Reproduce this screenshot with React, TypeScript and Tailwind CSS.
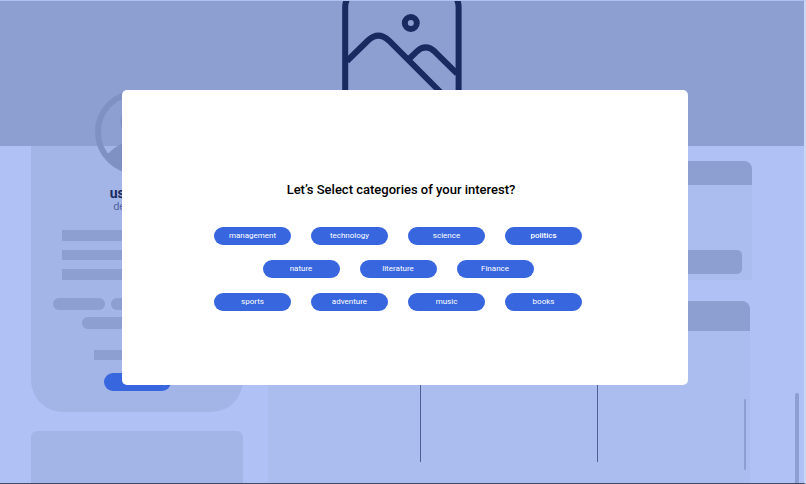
import { clsx } from 'clsx';

interface Category {
  label: string;
  selected?: boolean;
}

const CATEGORY_ROWS: Category[][] = [
  [{ label: 'management' }, { label: 'technology' }, { label: 'science' }, { label: 'politics', selected: true }],
  [{ label: 'nature' }, { label: 'literature' }, { label: 'Finance' }],
  [{ label: 'sports' }, { label: 'adventure' }, { label: 'music' }, { label: 'books' }],
];

function CoverImageIcon() {
  return (
    <svg className="h-[145px] w-[120px]" viewBox="0 0 120 145" fill="none" stroke="#182a60" strokeWidth="6" aria-hidden="true">
      <rect x="3.2" y="-11" width="113.4" height="140" rx="17" />
      <circle cx="68.8" cy="22" r="6" />
      <path d="M5 60 L26 39.500 Q36.400 29.600 46.800 39.500 L106.800 99.500" />
      <path d="M66.500 58.500 L74.400 50.800 Q83.700 42 93 50.800 L115 72.700" />
    </svg>
  );
}

function Avatar() {
  return (
    <svg className="h-[84px] w-[84px]" viewBox="0 0 86 86" aria-hidden="true">
      <circle cx="43" cy="43" r="40" fill="none" stroke="#7f90c3" strokeWidth="6" />
      <circle cx="43" cy="32" r="17" fill="#7f90c3" />
      <path d="M13.500 65 Q26 52 43 52 Q60 52 72.500 65 Q62 82 43 82 Q24 82 10 65 Z" fill="#7f90c3" />
    </svg>
  );
}

function ProfileCard() {
  return (
    <section className="flex h-[266px] shrink-0 flex-col items-center rounded-b-[32px] bg-[#a3b4e6]">
      <div className="-mt-[56px]">
        <Avatar />
      </div>
      <h2 className="mt-3 text-[14px] leading-[15px] font-bold text-[#182a60]">user one</h2>
      <p className="text-[11px] leading-[11px] text-[#5264a0]">developer</p>

      <div className="mt-[18px] flex w-[150px] flex-col gap-[9px]">
        <div className="h-[11px] bg-[#8d9ed1]" />
        <div className="h-[10px] bg-[#8d9ed1]" />
        <div className="h-[11px] bg-[#8d9ed1]" />
      </div>

      {/* Skill tags */}
      <div className="mt-[18px] flex flex-wrap justify-center gap-x-1.5 gap-y-[7px]">
        {[0, 1, 2, 3, 4].map((tag) => (
          <div key={tag} className="h-3 w-[52px] rounded-full bg-[#8d9ed1]" />
        ))}
      </div>

      <div className="mt-[21px] h-[10px] w-[86px] bg-[#8d9ed1]" />
      <button type="button" aria-label="Edit profile" className="mt-[13px] h-[18px] w-[67px] shrink-0 rounded-full bg-[#3866df]" />
    </section>
  );
}

function FeedColumn() {
  return (
    <main className="flex min-w-0 flex-1 flex-col gap-[21px] pt-[15px]">
      <section className="flex h-[119px] shrink-0 flex-col justify-between rounded-t-lg bg-[#abbcee] pb-1.5">
        <div className="h-6 rounded-t-lg bg-[#8d9ed1]" />
        <div className="mx-[10px] h-6 rounded-[5px] bg-[#8d9ed1]" />
      </section>

      <section className="mr-[2px] flex flex-1 flex-col rounded-t-lg bg-[#abbcee]">
        <div className="h-[30px] rounded-t-lg bg-[#8d9ed1]" />
        <div className="flex flex-1 pb-[21px]">
          <div className="w-[153px] shrink-0 border-r border-[#4c6194]" />
          <div className="w-[177px] shrink-0 border-r border-[#4c6194]" />
          <div className="flex flex-1 items-end justify-end pr-1">
            <div className="-mb-2 h-[71px] w-[2px] rounded-full bg-[#8d9ed1]" />
          </div>
        </div>
      </section>
    </main>
  );
}

function CategoryDialog() {
  return (
    <div
      role="dialog"
      aria-modal="true"
      aria-labelledby="category-title"
      className="w-full rounded-[5px] bg-white pt-[92px] pr-[14px] pb-[74px]"
    >
      <h1 id="category-title" className="ml-1.5 text-center text-[13px] leading-4 font-medium text-black">
        Let’s Select categories of your interest?
      </h1>
      <div className="mt-[29px] flex flex-col gap-[15px]">
        {CATEGORY_ROWS.map((row) => (
          <div key={row[0].label} className="flex justify-center gap-5">
            {row.map(({ label, selected }) => (
              <button
                key={label}
                type="button"
                aria-pressed={Boolean(selected)}
                className={clsx(
                  'h-[18px] w-[77px] rounded-full bg-[#3866df] text-[8px] leading-[18px] text-white',
                  selected && 'font-medium',
                )}
              >
                {label}
              </button>
            ))}
          </div>
        ))}
      </div>
    </div>
  );
}

export default function App() {
  return (
    <div className="relative flex h-screen flex-col overflow-hidden border-t border-r-2 border-b border-t-[#aec0ed] border-r-[#ccd6f5] border-b-[#3f4c63] bg-[#b0c1f5] font-[Roboto,sans-serif]">
      <header className="flex h-[145px] shrink-0 justify-center bg-[#8d9ed1]">
        <CoverImageIcon />
      </header>

      <div className="flex min-h-0 flex-1 pl-[31px]">
        <aside className="flex w-[212px] shrink-0 flex-col gap-[19px]">
          <ProfileCard />
          <section className="flex-1 rounded-t-[6px] bg-[#a3b4e6]" />
        </aside>
        <div className="flex min-w-0 flex-1 pl-[25px]">
          <FeedColumn />
          <div className="flex w-[52px] items-end justify-end pr-[5px]">
            <div className="h-[90px] w-1 rounded-t-full bg-[#8d9ed1]" />
          </div>
        </div>
      </div>

      {/* Modal layer */}
      <div className="absolute inset-0 flex items-start pt-[89px] pr-[116px] pl-[122px]">
        <CategoryDialog />
      </div>
    </div>
  );
}
